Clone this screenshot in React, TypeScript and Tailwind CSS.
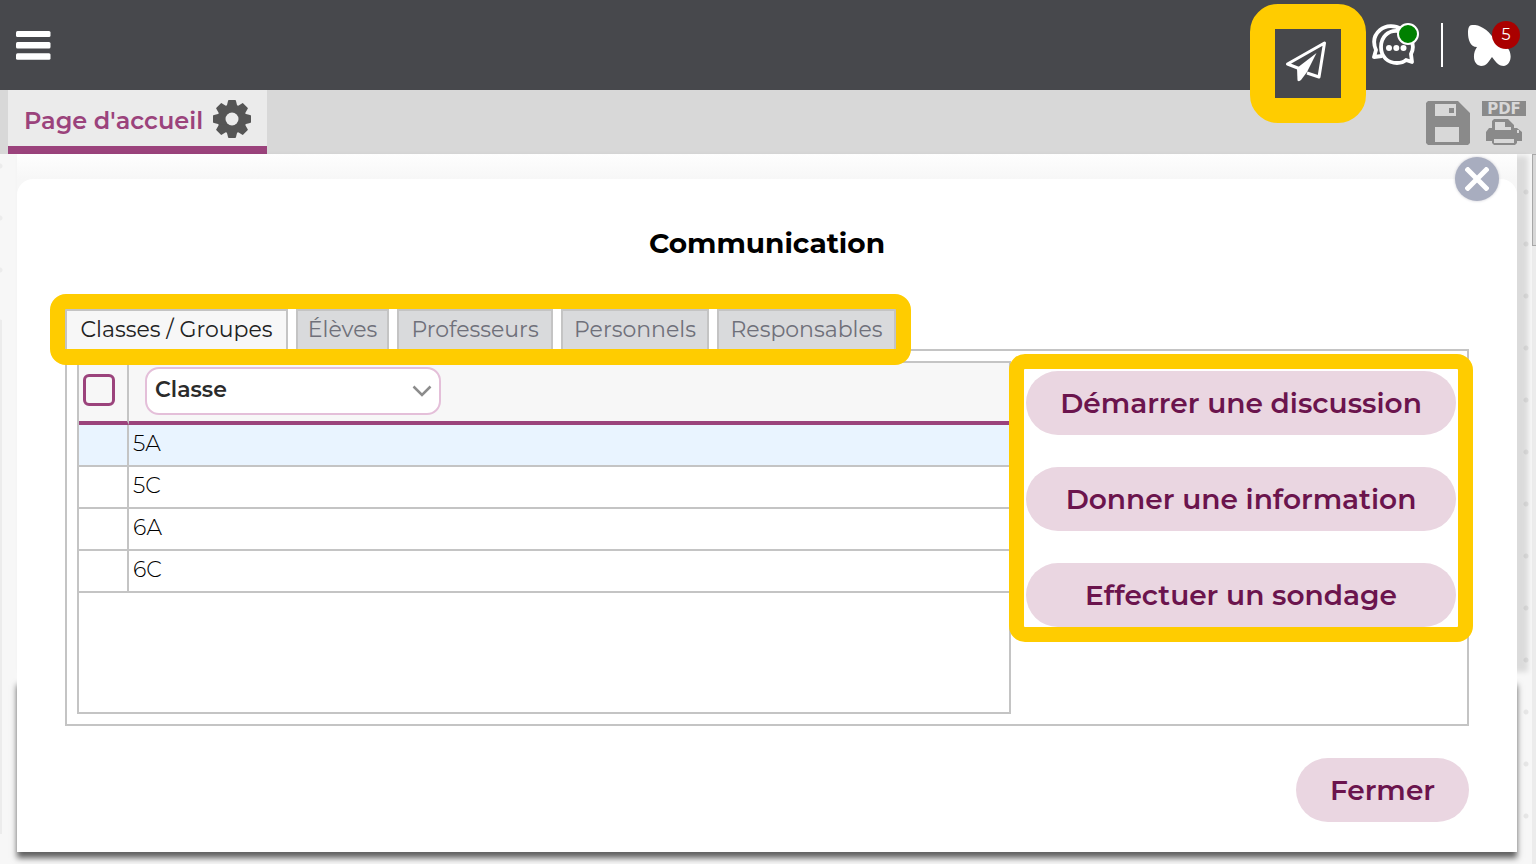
import React, { useState } from 'react';

const tabs = [
  { label: 'Classes / Groupes', width: 'w-[223px]' },
  { label: 'Élèves', width: 'w-[93px]' },
  { label: 'Professeurs', width: 'w-[156px]' },
  { label: 'Personnels', width: 'w-[148px]' },
  { label: 'Responsables', width: 'w-[179px]' },
];

const classes = ['5A', '5C', '6A', '6C'];

const actions = ['Démarrer une discussion', 'Donner une information', 'Effectuer un sondage'];

function MenuIcon() {
  return (
    <svg width="35" height="29" viewBox="0 0 35 29" fill="#fff">
      <rect width="34.500" height="6" rx="1.500" />
      <rect y="11" width="34.500" height="6.500" rx="1.500" />
      <rect y="22.300" width="34.500" height="6.500" rx="1.500" />
    </svg>
  );
}

function SendIcon() {
  return (
    <svg width="42" height="42" viewBox="0 0 42 42" fill="none" stroke="#fff" strokeWidth="3" strokeLinejoin="round">
      <path d="M14 28.500L2.500 24L39.500 3L34 37L22 33" />
      <path d="M31.500 13L12 28L12.500 40.500Q14 42 16 40L22 32z" fill="#fff" stroke="none" />
    </svg>
  );
}

function ChatIcon() {
  return (
    <svg width="44" height="42" viewBox="0 0 44 42" fill="none" stroke="#fff" strokeWidth="3.800" strokeLinejoin="round">
      <path d="M29 5C23 1 14 1 8 6C1 12 1 19 4 26L2 33l8-1" />
      <path d="M26 7C16 6 9 13 9 23s7 16 16 16c4 0 7-1 9-3l6 2-1-8c5-9-1-22-13-23z" />
      <g fill="#fff" stroke="none">
        <circle cx="17" cy="24" r="3" />
        <circle cx="24.300" cy="24" r="3" />
        <circle cx="31.500" cy="24" r="3" />
      </g>
    </svg>
  );
}

function ButterflyIcon() {
  return (
    <svg width="44" height="42" viewBox="0 0 44 42" fill="#fff">
      <path d="M4 0C12-1 22 6 27 16C30 9 36 4 42 4v16L38 22C44 25 45 39 36 41C30 41 27 36 24 32C21 36 19 41 13 41C5 40 4 29 9 22C2 22 0 14 0 8C0 3 1 0 4 0z" />
    </svg>
  );
}

function GearIcon() {
  return (
    <svg width="38" height="38" viewBox="0 0 38 38">
      <g fill="#555">
        <circle cx="19" cy="19" r="14.500" />
        {[0, 45, 90, 135].map((angle) => (
          <path
            key={angle}
            d="M16 0h6q1 0 1 1l1.500 6v24L23 37q0 1-1 1h-6q-1 0-1-1l-1.500-6V7L15 1q0-1 1-1z"
            transform={`rotate(${angle} 19 19)`}
          />
        ))}
      </g>
      <circle cx="19" cy="19" r="6.500" fill="#ebebeb" />
    </svg>
  );
}

function SaveIcon() {
  return (
    <svg width="44" height="44" viewBox="0 0 44 44" fill="#8a8a8a">
      <path fillRule="evenodd" d="M2 0h30l12 12v30l-2 2H2l-2-2V2zM9 3v12h21V3zM9 26v15h24V26z" />
      <rect x="23" y="7" width="5" height="5" />
    </svg>
  );
}

function PrinterIcon() {
  return (
    <svg width="36" height="26" viewBox="0 0 36 26" fill="#8a8a8a">
      <path
        fillRule="evenodd"
        d="M8 0h14l6 6v3h3l5 4v9h-5v2l-2 2H8l-2-2v-2H0V13l3-4h3V2zM9 3v8h16V8h-6V3zM8 20v4h20v-4zM31 11v3h2v-3z"
      />
    </svg>
  );
}

function CloseIcon() {
  return (
    <svg width="24" height="24" viewBox="0 0 24 24" stroke="#fff" strokeWidth="5">
      <path d="M1 1l22 22M23 1L1 23" />
    </svg>
  );
}

function ArrowIcon() {
  return (
    <svg
      width="20"
      height="12"
      viewBox="0 0 20 12"
      fill="none"
      stroke="#8c8c8c"
      strokeWidth="2.500"
      className="pointer-events-none absolute top-[18px] right-[9px]"
    >
      <path d="M1.500 1.500L10 10l8.500-8.500" />
    </svg>
  );
}

function Highlight({ className }: { className: string }) {
  return <div aria-hidden="true" className={`pointer-events-none absolute z-20 border-[#ffcc00] ${className}`} />;
}

function Header() {
  return (
    <header className="flex h-[90px] items-start justify-between bg-[#47484c] px-4">
      <button aria-label="Menu" className="mt-[31px]">
        <MenuIcon />
      </button>
      <div className="flex items-start">
        <div className="relative mt-[29px] mr-[31px]">
          <button
            aria-label="Communication"
            className="relative z-30 flex h-[69px] w-[66px] items-start justify-start bg-[#47484c] pt-[11px] pl-[10px]"
          >
            <SendIcon />
          </button>
          <Highlight className="-inset-[25px] rounded-[28px] border-[25px]" />
        </div>
        <button aria-label="Messages" className="relative mt-6 mr-[25px]">
          <ChatIcon />
          <span className="absolute -top-px -right-[3px] h-[22px] w-[22px] rounded-full border-2 border-white bg-[#008000]" />
        </button>
        <div className="mt-[23px] mr-[25px] h-11 w-0.5 bg-white" />
        <button aria-label="Notifications" className="relative mt-[25px] mr-2">
          <ButterflyIcon />
          <span className="absolute -top-1 -right-2 flex h-7 w-7 items-center justify-center rounded-full bg-[#aa0000] text-base text-white">
            5
          </span>
        </button>
      </div>
    </header>
  );
}

function Toolbar() {
  return (
    <nav className="flex h-16 items-start justify-between bg-[#d8d8d8] pr-[10px] pl-2">
      <div className="flex h-16 w-[259px] items-center justify-between border-b-8 border-[#9b437c] bg-[#ebebeb] pt-0.5 pr-4 pl-4">
        <a href="#" className="pt-1 text-2xl font-semibold whitespace-nowrap text-[#9b437c]">
          Page d'accueil
        </a>
        <button aria-label="Paramètres">
          <GearIcon />
        </button>
      </div>
      <div className="flex gap-3 pt-[11px]">
        <button aria-label="Enregistrer">
          <SaveIcon />
        </button>
        <button aria-label="Imprimer en PDF" className="flex w-11 flex-col items-center gap-[3px]">
          <span className="flex h-[15px] w-11 items-center justify-center bg-[#8a8a8a] font-['DejaVu_Sans'] text-[15px] leading-4 font-bold text-[#d8d8d8]">
            PDF
          </span>
          <PrinterIcon />
        </button>
      </div>
    </nav>
  );
}

function ClassTable() {
  return (
    <div className="min-h-[353px] flex-1 border-2 border-[#c4c4c4]">
      <table className="w-full table-fixed border-separate border-spacing-0 text-left text-[22px] font-light">
        <thead>
          <tr className="bg-[#f7f7f7]">
            <th className="h-[62px] w-[50px] border-r-2 border-b-4 border-r-[#c4c4c4] border-b-[#9b437c] p-0 pb-1 pl-1">
              <input
                type="checkbox"
                aria-label="Tout sélectionner"
                className="block h-8 w-8 appearance-none rounded-md border-[3px] border-[#9b437c] bg-[#f7f7f7]"
              />
            </th>
            <th className="border-b-4 border-b-[#9b437c] p-0 pb-0.5 pl-4">
              <div className="relative w-[296px]">
                <select
                  aria-label="Type de regroupement"
                  className="block h-12 w-full appearance-none rounded-[14px] border-2 border-[#e4bfd9] bg-white pb-[3px] pl-2 text-[22px] font-semibold text-[#2b2b2b]"
                >
                  <option>Classe</option>
                  <option>Groupe</option>
                </select>
                <ArrowIcon />
              </div>
            </th>
          </tr>
        </thead>
        <tbody>
          {classes.map((name, i) => (
            <tr key={name} className={i === 0 ? 'bg-[#e9f4ff]' : 'bg-white'}>
              <td className="h-[42px] border-r-2 border-b-2 border-[#c4c4c4] p-0" />
              <td className="h-[42px] border-b-2 border-[#c4c4c4] p-0 pb-0.5 pl-1 leading-8">{name}</td>
            </tr>
          ))}
        </tbody>
      </table>
    </div>
  );
}

export default function App() {
  const [activeTab, setActiveTab] = useState(0);

  return (
    <div className="flex min-h-screen flex-col overflow-hidden bg-[#f7f7f7] font-[Montserrat,Inter,sans-serif] text-black">
      <Header />
      <Toolbar />
      <div className="flex flex-1">
        <div className="flex w-[17px] flex-col">
          <div className="h-[166px] bg-[radial-gradient(circle_at_0px_12px,#ececec_2px,transparent_3px)] bg-size-[17px_52px] bg-repeat-y" />
          <div className="mb-[30px] w-0.5 flex-1 bg-[#ececec]" />
        </div>
        <main className="relative isolate flex-1 pb-3">
          {/* window left open behind the dialog */}
          <div
            aria-hidden="true"
            className="absolute top-0 right-0 left-0 -z-10 h-[508px] bg-linear-to-b from-[#fefefe] to-[#f7f7f7] to-[25px] shadow-[7px_6px_5px_4px_#0000001c]"
          />
          <div className="pt-[25px]">
            <section role="dialog" aria-labelledby="dialog-title" className="relative rounded-t-2xl bg-white px-12 pt-[46px] pb-[30px]">
              <div aria-hidden="true" className="absolute inset-x-0 top-[500px] bottom-0 -z-10 shadow-[0_6px_6px_#606060]" />
              <button
                aria-label="Fermer la fenêtre"
                className="absolute -top-[22px] right-[18px] flex h-11 w-11 items-center justify-center rounded-full bg-[#a8adbf] shadow-[0_0_3px_#c8c8d0]"
              >
                <CloseIcon />
              </button>
              <h1 id="dialog-title" className="text-center text-[28px] leading-9 font-bold">
                Communication
              </h1>
              <div role="tablist" className="relative mt-12 flex w-fit gap-2">
                {tabs.map((tab, i) => (
                  <button
                    key={tab.label}
                    role="tab"
                    aria-selected={i === activeTab}
                    onClick={() => setActiveTab(i)}
                    className={`${tab.width} h-10 border-2 border-b-0 border-[#c4c4c4] pb-0.5 text-[22px] whitespace-nowrap ${
                      i === activeTab ? 'bg-[#f7f7f7] text-[#222]' : 'bg-[#d9dadc] text-[#6f707a]'
                    }`}
                  >
                    {tab.label}
                  </button>
                ))}
                <Highlight className="-inset-x-[15px] -top-[15px] -bottom-4 rounded-2xl border-[15px] border-b-[16px]" />
              </div>
              <div className="flex items-start gap-[15px] border-2 border-[#c4c4c4] p-[10px] pr-[11px]">
                <ClassTable />
                <div className="relative mt-[10px] flex w-[430px] flex-col gap-8">
                  {actions.map((action) => (
                    <button key={action} className="h-16 rounded-full bg-[#ead6e1] text-[28px] font-semibold text-[#6b144d]">
                      {action}
                    </button>
                  ))}
                  <Highlight className="-inset-x-[17px] -top-[17px] -bottom-[15px] rounded-2xl border-[15px]" />
                </div>
              </div>
              <div className="mt-8 flex justify-end">
                <button className="h-16 w-[173px] rounded-full bg-[#ead6e1] text-[28px] font-semibold text-[#6b144d]">
                  Fermer
                </button>
              </div>
            </section>
          </div>
        </main>
        <div className="w-[15px] bg-[radial-gradient(circle_at_9px_38px,#e6e6e6_2px,transparent_3px)] bg-size-[15px_52px] bg-repeat-y" />
        <div className="w-1 bg-[#ececec]">
          <div className="h-[92px] border border-r-0 border-[#a8a8a8] bg-[#d8d8d8]" />
        </div>
      </div>
    </div>
  );
}
